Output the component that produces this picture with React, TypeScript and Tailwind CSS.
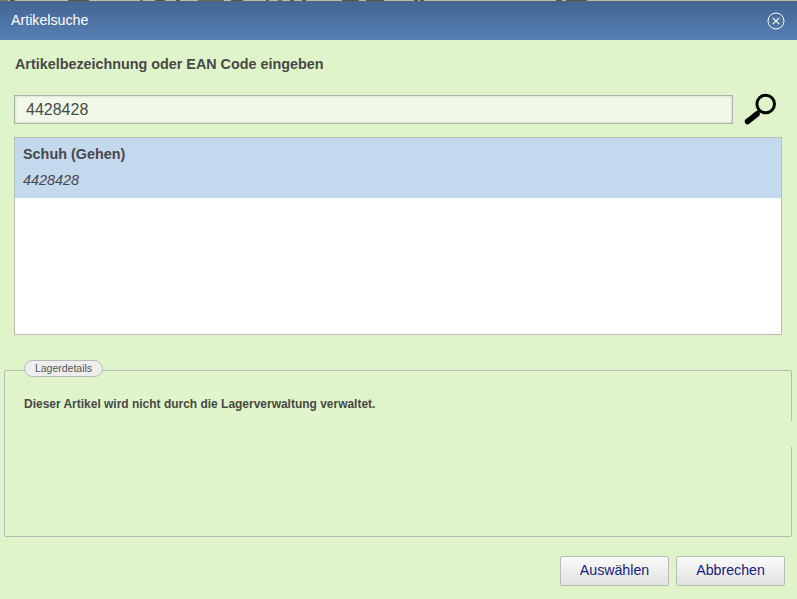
export default function App() {
  // dark patches of the page behind the dialog, visible in the top strip
  const strip = [
    [0, 8, '#77776a'], [10, 5, '#55554f'], [68, 21, '#55554f'], [140, 3, '#66665c'], [155, 10, '#55554f'], [176, 4, '#55554f'],
    [198, 26, '#66665c'], [231, 12, '#55554f'], [266, 3, '#55554f'], [278, 4, '#66665c'], [290, 4, '#55554f'],
    [302, 4, '#55554f'], [342, 17, '#55554f'], [366, 18, '#55554f'], [414, 4, '#55554f'], [420, 4, '#55554f'],
    [556, 6, '#55554f'], [566, 21, '#55554f'],
  ] as const

  return (
    <div className="w-[797px] h-[599px] overflow-hidden flex flex-col bg-[#dff5c9] font-['Liberation_Sans',Arial,sans-serif] text-[#484848]">
      <div className="relative h-[1px] bg-[#b9bda6] shrink-0">
        {strip.map(([left, width, color], i) => (
          <div key={i} className="absolute top-0 h-[1px]" style={{ left, width, backgroundColor: color }} />
        ))}
      </div>

      {/* Title bar */}
      <div className="h-[39px] shrink-0 flex items-center justify-between pl-[11px] pr-[12px] border-t border-[#55677f] bg-gradient-to-b from-[#436693] to-[#5680b4] text-white">
        <span className="text-[14.2px]">Artikelsuche</span>
        <svg width="18" height="18" viewBox="0 0 18 18" fill="none" stroke="#ffffff" aria-label="Schließen">
          <circle cx="9" cy="9" r="8" strokeWidth="1" />
          <path d="M5.8 5.8 12.2 12.2M12.2 5.8 5.8 12.2" strokeWidth="1.2" />
        </svg>
      </div>

      {/* Body */}
      <div className="flex-1 flex flex-col">
        <div className="pl-[15px] pt-[15px] h-[55px] shrink-0 text-[14.35px] leading-[18px] font-bold">
          Artikelbezeichnung oder EAN Code eingeben
        </div>

        <div className="flex items-center pl-[14px] h-[29px] shrink-0">
          <div className="w-[719px] h-[29px] flex items-center pl-[11px] text-[16px] bg-[#f1fae9] border border-[#b0b0b0] shadow-[inset_0_0_3px_rgba(0,0,0,0.18)]">
            4428428
          </div>
          <svg className="ml-[10px] mt-[1px]" width="35" height="34" viewBox="0 0 35 34" fill="none" stroke="#000000" aria-label="Suchen">
            <circle cx="22.7" cy="11" r="8.8" strokeWidth="3" />
            <path d="M16.5 17.5 13 21" strokeWidth="3" />
            <path d="M14 21 4.5 28.5" strokeWidth="5.5" strokeLinecap="round" />
          </svg>
        </div>

        {/* Result list */}
        <div className="ml-[14px] mt-[13px] w-[768px] h-[198px] shrink-0 bg-white border border-[#bcbcbc]">
          <div className="h-[60px] bg-[#c3d9ee] pl-[8px]">
            <div className="pt-[7px] text-[14.4px] leading-[18px] font-bold">Schuh (Gehen)</div>
            <div className="pt-[8px] text-[14.4px] leading-[18px] italic">4428428</div>
          </div>
        </div>

        {/* Lagerdetails */}
        <div className="relative ml-[4px] mt-[35px] w-[788px] h-[167px] shrink-0 border border-[#b8b8b8] rounded-[2px]">
          <div className="absolute left-[19px] top-[-11px] h-[17px] w-[79px] flex items-center justify-center rounded-full bg-[#eeeeee] border border-[#b8b8b8] text-[10.5px] text-[#555555]">
            Lagerdetails
          </div>
          <div className="absolute right-[-1px] top-[50px] h-[26px] w-[1px] bg-[#dff5c9]" />
          <div className="pl-[19px] pt-[26px] text-[11.97px] leading-[14px] font-bold">
            Dieser Artikel wird nicht durch die Lagerverwaltung verwaltet.
          </div>
        </div>

        {/* Buttons */}
        <div className="flex justify-end gap-[7px] pr-[12px] mt-[19px]">
          <button className="w-[109px] h-[30px] rounded-[2px] border border-[#bbbbbb] bg-gradient-to-b from-[#fafafa] to-[#e2e2e2] text-[14.2px] text-[#1a1a80]">
            Auswählen
          </button>
          <button className="w-[109px] h-[30px] rounded-[2px] border border-[#bbbbbb] bg-gradient-to-b from-[#fafafa] to-[#e2e2e2] text-[14.2px] text-[#1a1a80]">
            Abbrechen
          </button>
        </div>
      </div>
    </div>
  )
}
